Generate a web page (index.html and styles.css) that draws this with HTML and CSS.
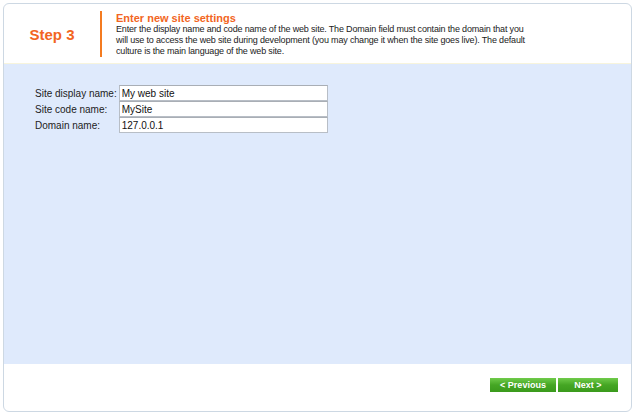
FILE: index.html
```html
<!DOCTYPE html>
<html lang="en">
<head>
  <meta charset="UTF-8" />
  <title>New site wizard</title>
  <link rel="stylesheet" href="styles.css">
</head>
<body>
  <div class="wizard">
    <div class="header">
      <div class="step">Step 3</div>
      <div class="info">
        <div class="title">Enter new site settings</div>
        <div class="desc">Enter the display name and code name of the web site. The Domain field must contain the domain that you<br>
          will use to access the web site during development (you may change it when the site goes live). The default<br>
          culture is the main language of the web site.</div>
      </div>
    </div>

    <div class="content">
      <table class="form">
        <tr>
          <td class="label">Site display name:</td>
          <td><input type="text" value="My web site" /></td>
        </tr>
        <tr>
          <td class="label">Site code name:</td>
          <td><input type="text" value="MySite" /></td>
        </tr>
        <tr>
          <td class="label">Domain name:</td>
          <td><input type="text" value="127.0.0.1" /></td>
        </tr>
      </table>
    </div>

    <div class="footer">
      <button class="btn">&lt; Previous</button>
      <button class="btn">Next &gt;</button>
    </div>
  </div>
</body>
</html>
```

FILE: styles.css
```css
body {
  margin: 0;
  background-color: #ffffff;
  font-family: "Liberation Sans", Arial, sans-serif;
}

.wizard {
  margin: 3px;
  width: 627px;
  height: 407px;
  border: 1px solid #cdd8e3;
  border-radius: 6px;
  overflow: hidden;
  display: flex;
  flex-direction: column;
}

.header {
  height: 59px;
  display: flex;
  align-items: center;
  border-bottom: 1px solid #f7f4dc;
}

.step {
  width: 96px;
  align-self: stretch;
  display: flex;
  align-items: center;
  justify-content: center;
  margin-top: 1px;
  font-size: 15px;
  font-weight: bold;
  color: #f26522;
}

.info {
  border-left: 2px solid #f47b20;
  padding: 1px 0 0 14px;
  margin-top: 1px;
}

.title {
  font-size: 11px;
  font-weight: bold;
  color: #f26522;
  line-height: 12px;
}

.desc {
  font-size: 9px;
  color: #222;
  line-height: 11px;
  white-space: nowrap;
  letter-spacing: -0.17px;
}

.content {
  flex: 1;
  background-color: #dfeafc;
  padding: 21px 0 0 31px;
}

.form {
  border-collapse: collapse;
}

.form td {
  padding: 0;
}

.label {
  font-size: 10px;
  color: #222;
  padding-right: 2px !important;
}

.form input {
  display: block;
  box-sizing: border-box;
  width: 209px;
  height: 16px;
  margin: 0;
  padding: 0 2px;
  border: 1px solid #b8bec6;
  border-top-color: #a9aeb5;
  font-family: "Liberation Sans", Arial, sans-serif;
  font-size: 10px;
  color: #111;
  background-color: #fff;
}

.footer {
  height: 47px;
  display: flex;
  justify-content: flex-end;
  align-items: flex-start;
  padding: 14px 13px 0 0;
  box-sizing: border-box;
  gap: 2px;
}

.btn {
  height: 14px;
  padding: 0;
  border: none;
  background: linear-gradient(#6fcb4a, #45a624 50%, #3a9a1c);
  color: #fff;
  font-family: "Liberation Sans", Arial, sans-serif;
  font-size: 9px;
  font-weight: bold;
  cursor: pointer;
}

.btn:first-child {
  width: 66px;
}

.btn:last-child {
  width: 60px;
}
```
